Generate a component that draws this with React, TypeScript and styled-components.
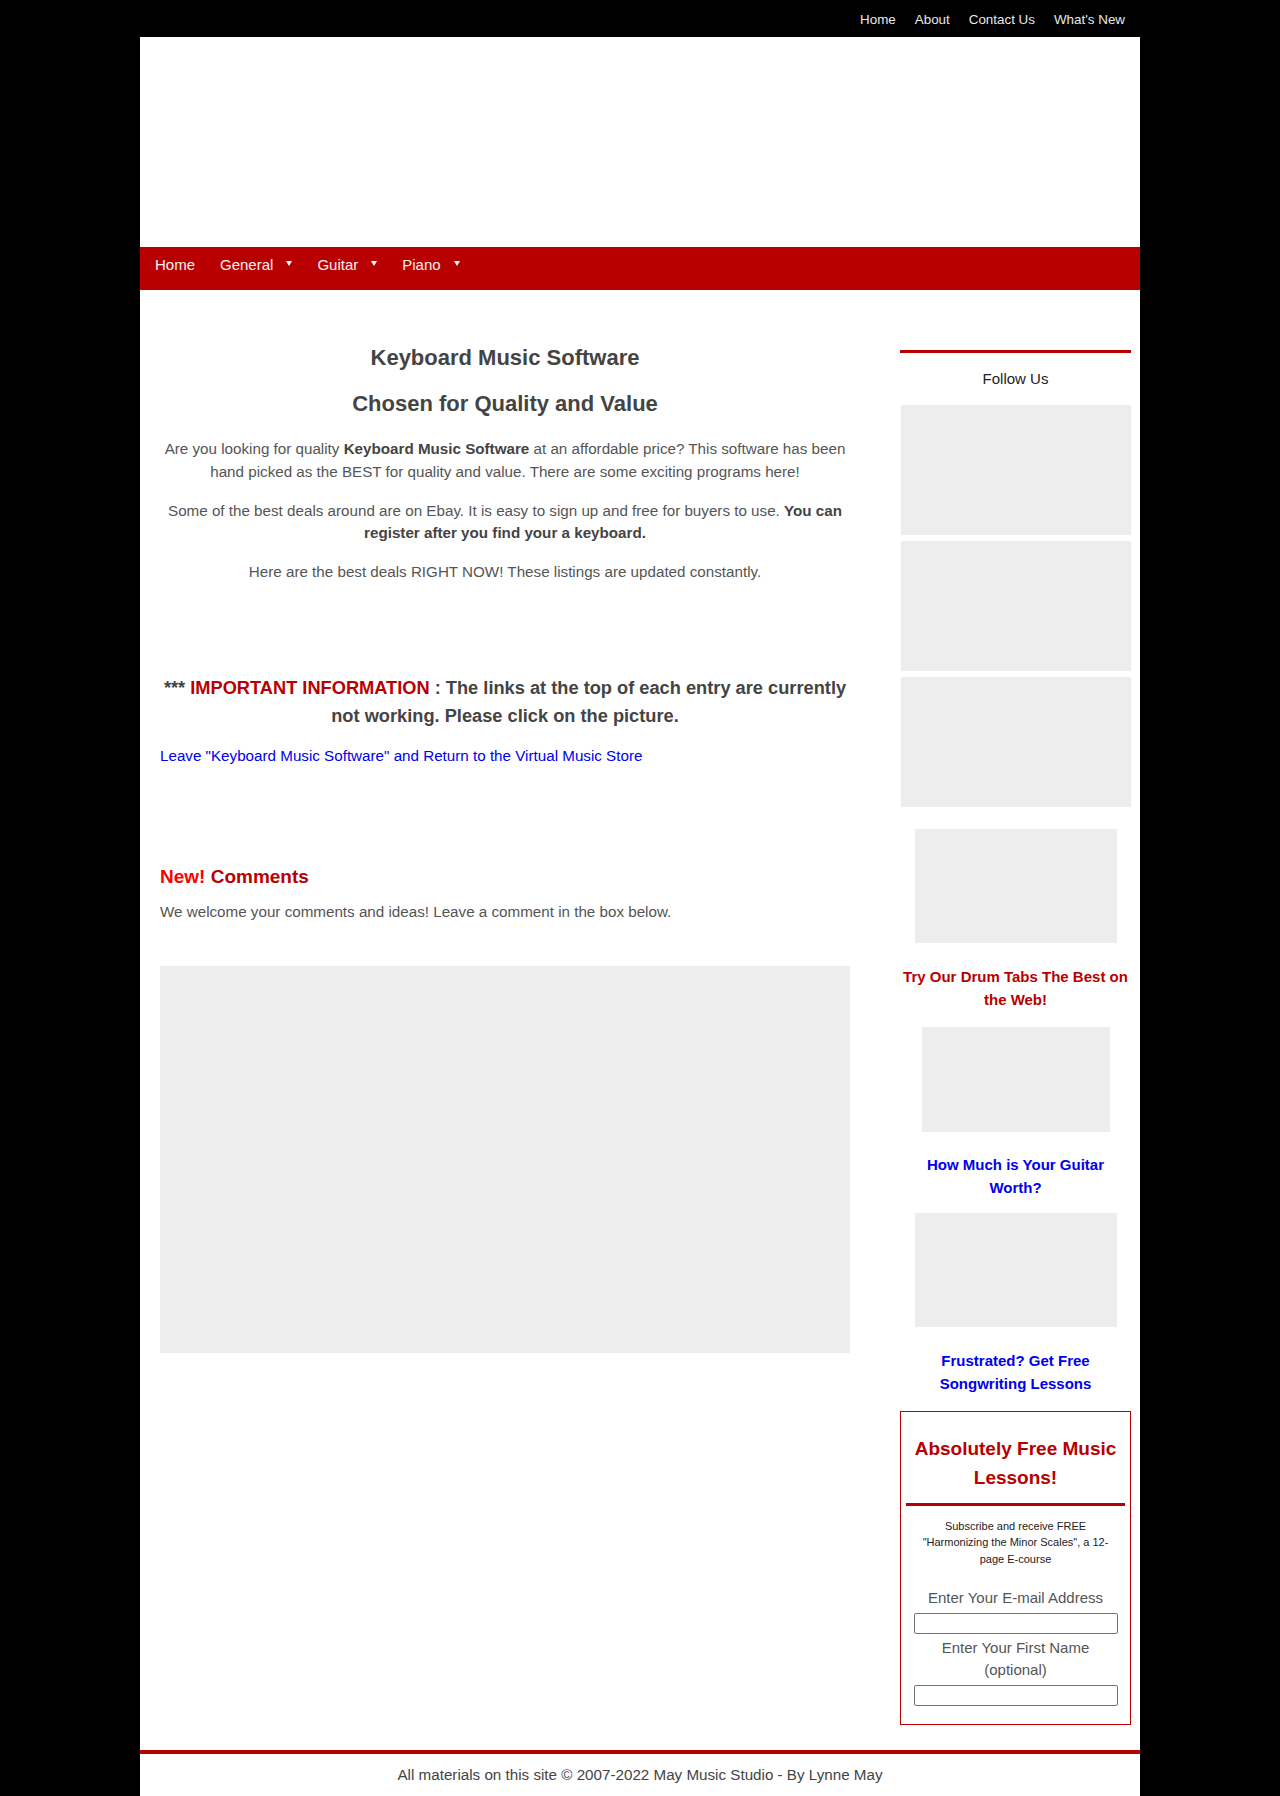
import React from "react";
import styled, { createGlobalStyle } from "styled-components";

const GlobalStyle = createGlobalStyle`
  html, body {
    margin: 0;
    padding: 0;
    background: #000;
  }
  body {
    font-family: "Liberation Sans", Arial, sans-serif;
    color: #444;
  }
  * { box-sizing: border-box; }
`;

const TopBar = styled.div`
  width: 1000px;
  margin: 0 auto;
  height: 37px;
  display: flex;
  justify-content: flex-end;
  align-items: center;
  gap: 19px;
  padding: 3px 15px 0 0;
`;

const TopLink = styled.a`
  color: #e8e8e8;
  font-size: 13.4px;
  text-decoration: none;
  line-height: 16px;
`;

const Page = styled.div`
  width: 1000px;
  margin: 0 auto;
  background: #fff;
`;

const Header = styled.div`
  height: 210px;
`;

const RedNav = styled.nav`
  height: 43px;
  background: #b80000;
  display: flex;
  align-items: flex-start;
  gap: 25px;
  padding: 9px 0 0 15px;
`;

const NavItem = styled.a`
  display: flex;
  align-items: flex-start;
  color: #f4f4f4;
  font-size: 15px;
  line-height: 17px;
  text-decoration: none;
`;

const Caret = styled.span`
  width: 0;
  height: 0;
  margin: 5px 0 0 13px;
  border-left: 3px solid transparent;
  border-right: 3px solid transparent;
  border-top: 5px solid #fff;
`;

const Main = styled.div`
  display: flex;
  align-items: flex-start;
  gap: 50px;
  padding: 51px 9px 25px 20px;
`;

const Content = styled.main`
  width: 690px;
`;

const Title = styled.h1<{ $gap?: number }>`
  margin: ${(p) => p.$gap ?? 0}px 0 0;
  font-size: 22px;
  line-height: 33px;
  font-weight: bold;
  text-align: center;
  color: #444;
`;

const Para = styled.p<{ $gap?: number; $center?: boolean }>`
  margin: ${(p) => p.$gap ?? 16}px 0 0;
  font-size: 15.2px;
  line-height: 22.8px;
  color: #555;
  text-align: ${(p) => (p.$center ? "center" : "left")};
  b { color: #444; }
`;

const Notice = styled.p`
  margin: 90.5px 0 0;
  font-size: 18.24px;
  line-height: 28px;
  font-weight: bold;
  text-align: center;
  color: #444;
`;

const RedText = styled.span`
  color: #b80000;
`;

const StoreLink = styled.a`
  display: block;
  margin-top: 14.5px;
  font-size: 15.2px;
  line-height: 22.8px;
  color: #0000ee;
  text-decoration: none;
`;

const CommentsTitle = styled.h2`
  margin: 95px 0 0;
  font-size: 19px;
  line-height: 28px;
  font-weight: bold;
  color: #b80000;
`;

const BrightRed = styled.span`
  color: #ff0000;
`;

const CommentBox = styled.div`
  margin-top: 42px;
  height: 387px;
  background: #ededed;
`;

const Sidebar = styled.aside`
  width: 231px;
  display: flex;
  flex-direction: column;
  align-items: center;
  margin-top: 9px;
`;

const RedRule = styled.div<{ $gap?: number }>`
  align-self: stretch;
  height: 3px;
  background: #b80000;
  margin-top: ${(p) => p.$gap ?? 0}px;
`;

const FollowTitle = styled.div`
  margin-top: 14.75px;
  font-size: 15px;
  line-height: 22.5px;
  color: #222;
`;

const GrayBox = styled.div<{ $w: number; $h: number; $gap: number }>`
  width: ${(p) => p.$w}px;
  height: ${(p) => p.$h}px;
  margin-top: ${(p) => p.$gap}px;
  background: #ededed;
  flex-shrink: 0;
`;

const SideLink = styled.a<{ $color: string; $gap: number }>`
  display: block;
  margin-top: ${(p) => p.$gap}px;
  font-size: 15px;
  line-height: 23px;
  font-weight: bold;
  text-align: center;
  color: ${(p) => p.$color};
  text-decoration: none;
`;

const FormBox = styled.div`
  align-self: stretch;
  margin-top: 16px;
  border: 1px solid #b80000;
  padding: 22px 5px 18px;
  display: flex;
  flex-direction: column;
  align-items: center;
`;

const FormTitle = styled.h3`
  margin: 0;
  font-size: 19px;
  line-height: 29px;
  font-weight: bold;
  color: #b80000;
  text-align: center;
`;

const FormIntro = styled.p`
  width: 196px;
  margin: 12px 0 0;
  font-size: 11px;
  line-height: 16.5px;
  color: #222;
  text-align: center;
`;

const FieldLabel = styled.label<{ $gap: number }>`
  width: 204px;
  margin-top: ${(p) => p.$gap}px;
  font-size: 15px;
  line-height: 22px;
  color: #555;
  text-align: center;
`;

const TextInput = styled.input`
  width: 204px;
  height: 21px;
  margin-top: 4px;
  border: 1px solid #767676;
  border-radius: 2px;
  background: #fff;
  padding: 1px 2px;
  font-size: 13px;
`;

const Footer = styled.footer`
  border-top: 4px solid #b80000;
  padding: 10px 0 10px;
  font-size: 15.2px;
  line-height: 22.8px;
  text-align: center;
  color: #444;
`;

export default function App() {
  return (
    <>
      <GlobalStyle />
      <TopBar>
        <TopLink href="#">Home</TopLink>
        <TopLink href="#">About</TopLink>
        <TopLink href="#">Contact Us</TopLink>
        <TopLink href="#">What's New</TopLink>
      </TopBar>
      <Page>
        <Header />
        <RedNav>
          <NavItem href="#">Home</NavItem>
          <NavItem href="#">
            General<Caret />
          </NavItem>
          <NavItem href="#">
            Guitar<Caret />
          </NavItem>
          <NavItem href="#">
            Piano<Caret />
          </NavItem>
        </RedNav>
        <Main>
          <Content>
            <Title>Keyboard Music Software</Title>
            <Title $gap={13}>Chosen for Quality and Value</Title>
            <Para $center $gap={18}>
              Are you looking for quality <b>Keyboard Music Software</b> at an affordable price? This
              software has been hand picked as the BEST for quality and value. There are some
              exciting programs here!
            </Para>
            <Para $center>
              Some of the best deals around are on Ebay. It is easy to sign up and free for buyers to
              use. <b>You can register after you find your a keyboard.</b>
            </Para>
            <Para $center>
              Here are the best deals RIGHT NOW! These listings are updated constantly.
            </Para>
            <Notice>
              *** <RedText>IMPORTANT INFORMATION</RedText> : The links at the top of each entry are
              currently not working. Please click on the picture.
            </Notice>
            <StoreLink href="#">
              Leave "Keyboard Music Software" and Return to the Virtual Music Store
            </StoreLink>
            <CommentsTitle>
              <BrightRed>New!</BrightRed> Comments
            </CommentsTitle>
            <Para $gap={10}>
              We welcome your comments and ideas! Leave a comment in the box below.
            </Para>
            <CommentBox />
          </Content>
          <Sidebar>
            <RedRule />
            <FollowTitle>Follow Us</FollowTitle>
            <GrayBox $w={230} $h={130} $gap={15} />
            <GrayBox $w={230} $h={130} $gap={6} />
            <GrayBox $w={230} $h={130} $gap={6} />
            <GrayBox $w={202} $h={114} $gap={22} />
            <SideLink href="#" $color="#b80000" $gap={22}>
              Try Our Drum Tabs The Best on the Web!
            </SideLink>
            <GrayBox $w={188} $h={105} $gap={16} />
            <SideLink href="#" $color="#0000ee" $gap={20.5}>
              How Much is Your Guitar
              <br />
              Worth?
            </SideLink>
            <GrayBox $w={202} $h={114} $gap={14.5} />
            <SideLink href="#" $color="#0000ee" $gap={21.5}>
              Frustrated? Get Free
              <br />
              Songwriting Lessons
            </SideLink>
            <FormBox>
              <FormTitle>
                Absolutely Free Music
                <br />
                Lessons!
              </FormTitle>
              <RedRule $gap={11} />
              <FormIntro>
                Subscribe and receive FREE "Harmonizing the Minor Scales", a 12-page E-course
              </FormIntro>
              <FieldLabel $gap={20}>Enter Your E-mail Address</FieldLabel>
              <TextInput type="text" />
              <FieldLabel $gap={3}>Enter Your First Name (optional)</FieldLabel>
              <TextInput type="text" />
            </FormBox>
          </Sidebar>
        </Main>
        <Footer>All materials on this site © 2007-2022 May Music Studio - By Lynne May</Footer>
      </Page>
    </>
  );
}
